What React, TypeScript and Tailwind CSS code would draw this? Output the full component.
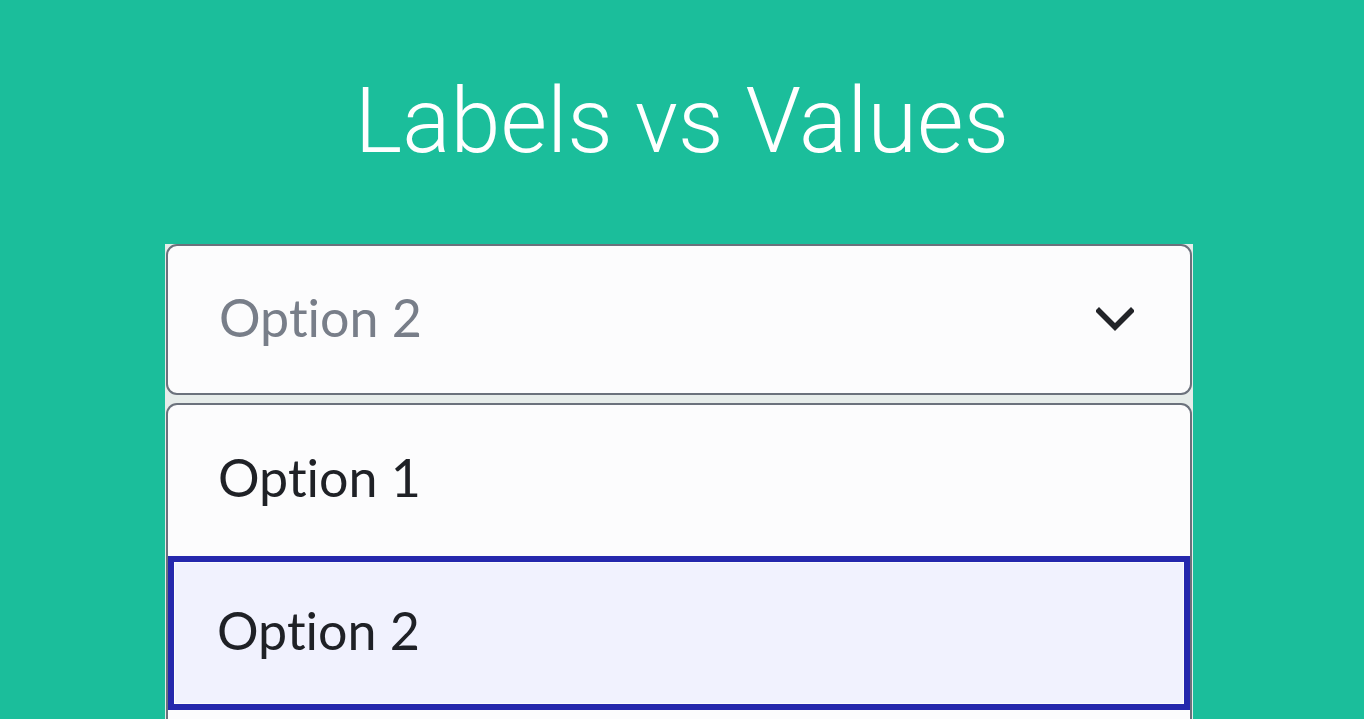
export default function App() {
  return (
    <div className="h-[719px] w-[1364px] overflow-hidden bg-[#1bbe9b]">
      <h1 className="pt-[77px] text-center text-[90px] font-light leading-none text-white [font-family:Roboto,sans-serif]">
        Labels vs Values
      </h1>
      <div className="ml-[165px] mt-[77px] w-[1028px] h-[500px] bg-[#e6ecea] px-[1px] [font-family:Lato,sans-serif] [font-variant-ligatures:none]">
        <div className="flex h-[151px] items-center justify-between rounded-[11px] border-2 border-[#6b717c] bg-[#fcfcfd] pb-[6px] pl-[51px] pr-[56px]">
          <span className="text-[52px] text-[#787e89]">Option 2</span>
          <svg width="38" height="26" viewBox="0 0 38 26" fill="none" className="mt-[6px]">
            <path d="M3 4 L19 20 L35 4" stroke="#222428" strokeWidth="5.5" strokeLinecap="square" />
          </svg>
        </div>
        <div className="mt-[8px] rounded-t-[11px] border-2 border-b-0 border-[#6b717c] bg-[#fcfcfd]">
          <div className="flex h-[151px] items-center pb-[8px] pl-[50px] text-[52px] text-[#1f2126]">Option 1</div>
          <div className="h-[154px] border-[6px] border-[#2528ad] p-[1px]">
            <div className="flex h-full items-center bg-[#f1f2fe] pb-[6px] pl-[42px] text-[52px] text-[#1f2126]">Option 2</div>
          </div>
          <div className="h-[100px]" />
        </div>
      </div>
    </div>
  )
}
